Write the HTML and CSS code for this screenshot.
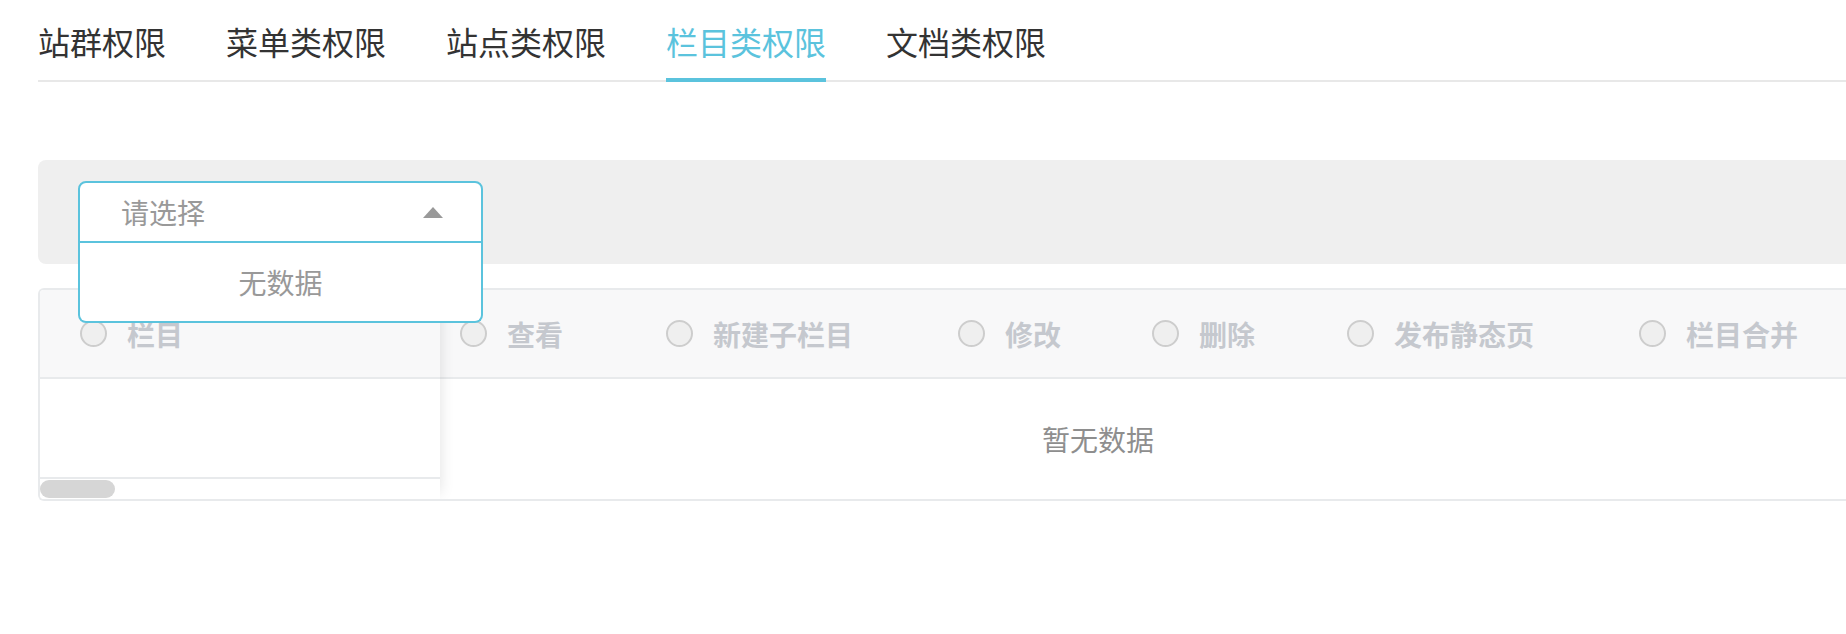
FILE: index.html
```html
<!DOCTYPE html>
<html lang="zh-CN">
<head>
<meta charset="utf-8">
<title>栏目类权限</title>
<link rel="stylesheet" href="styles.css">
</head>
<body>
<div class="page">
  <nav class="tabbar">
    <div class="tab">站群权限</div>
    <div class="tab">菜单类权限</div>
    <div class="tab">站点类权限</div>
    <div class="tab active">栏目类权限</div>
    <div class="tab">文档类权限</div>
  </nav>

  <div class="filter">
    <div class="select">
      <div class="select-input">
        <span class="placeholder">请选择</span>
        <span class="caret"></span>
      </div>
      <div class="select-drop">无数据</div>
    </div>
  </div>

  <div class="table">
    <div class="fixed-col">
      <div class="th fixed-th">
        <span class="radio"></span><span class="th-label">栏目</span>
      </div>
      <div class="fixed-body"></div>
      <div class="fixed-scroll"><span class="thumb"></span></div>
    </div>
    <div class="scroll-part">
      <div class="head-row">
        <div class="th w1"><span class="radio"></span><span class="th-label">查看</span></div>
        <div class="th w2"><span class="radio"></span><span class="th-label">新建子栏目</span></div>
        <div class="th w3"><span class="radio"></span><span class="th-label">修改</span></div>
        <div class="th w4"><span class="radio"></span><span class="th-label">删除</span></div>
        <div class="th w5"><span class="radio"></span><span class="th-label">发布静态页</span></div>
        <div class="th w6"><span class="radio"></span><span class="th-label">栏目合并</span></div>
      </div>
      <div class="empty-row"><span class="empty-text">暂无数据</span></div>
    </div>
  </div>
</div>
</body>
</html>
```

FILE: styles.css
```css
html, body {
  margin: 0;
  padding: 0;
  overflow: hidden;
  background: #fff;
}

body {
  font-family: "Noto Sans CJK SC", "Noto Sans", sans-serif;
  color: #333;
}

.page {
  padding-left: 38px;
  margin-right: -30px;
}

/* Tabs */
.tabbar {
  display: flex;
  gap: 60px;
  box-shadow: inset 0 -2px 0 #e8e8e8;
}

.tab {
  height: 82px;
  box-sizing: border-box;
  padding-top: 25px;
  font-size: 32px;
  line-height: 32px;
  color: #333;
  border-bottom: 4px solid transparent;
  white-space: nowrap;
}

.tab.active {
  color: #5bc3dd;
  border-bottom-color: #5bc3dd;
}

/* Filter box */
.filter {
  margin-top: 78px;
  background: #efefef;
  border-radius: 8px 0 0 8px;
  padding: 21px 0 21px 40px;
}

.select {
  position: relative;
  width: 405px;
  z-index: 5;
}

.select-input {
  height: 62px;
  box-sizing: border-box;
  border: 2px solid #5bc3dd;
  border-radius: 8px 8px 0 0;
  background: #fff;
  display: flex;
  align-items: center;
  justify-content: space-between;
  padding: 0 38px 0 41px;
}

.placeholder {
  font-size: 28px;
  color: #999;
}

.caret {
  width: 0;
  height: 0;
  border-left: 10px solid transparent;
  border-right: 10px solid transparent;
  border-bottom: 11px solid #999;
}

.select-drop {
  position: absolute;
  top: 100%;
  left: 0;
  right: 0;
  height: 80px;
  box-sizing: border-box;
  border: 2px solid #5bc3dd;
  border-top: none;
  border-radius: 0 0 8px 8px;
  background: #fff;
  display: flex;
  align-items: center;
  justify-content: center;
  font-size: 28px;
  color: #999;
}

/* Table */
.table {
  margin-top: 24px;
  display: flex;
  border: 2px solid #e8eaec;
  border-right: none;
  border-radius: 6px 0 0 6px;
  height: 213px;
  box-sizing: border-box;
  overflow: hidden;
}

.th {
  display: flex;
  align-items: center;
  height: 89px;
  box-sizing: border-box;
  background: #f8f8f9;
  border-bottom: 2px solid #e8eaec;
}

.radio {
  width: 27px;
  height: 27px;
  box-sizing: border-box;
  border: 2px solid #cdcdcd;
  border-radius: 50%;
  background: #efefef;
  flex: none;
}

.th-label {
  margin-left: 20px;
  font-size: 28px;
  font-weight: 700;
  color: #c5c8ce;
  white-space: nowrap;
}

.fixed-col {
  width: 400px;
  flex: none;
  display: flex;
  flex-direction: column;
  position: relative;
  z-index: 2;
  background: #fff;
  box-shadow: 6px 0 14px -6px rgba(0, 0, 0, 0.12);
}

.fixed-th {
  padding-left: 40px;
}

.fixed-body {
  height: 100px;
  box-sizing: border-box;
  border-bottom: 2px solid #e8eaec;
}

.fixed-scroll {
  flex: 1;
  padding-top: 1px;
}

.thumb {
  display: block;
  width: 75px;
  height: 18px;
  border-radius: 9px;
  background: #d6d6d6;
}

.scroll-part {
  flex: 1;
  display: flex;
  flex-direction: column;
  min-width: 0;
}

.head-row {
  display: flex;
}

.head-row .th {
  padding-left: 20px;
  flex: none;
}

.w1 { width: 206px; }
.w2 { width: 292px; }
.w3 { width: 194px; }
.w4 { width: 195px; }
.w5 { width: 292px; }
.w6 { width: 260px; }

.empty-row {
  flex: 1;
  display: flex;
  align-items: center;
  padding-left: 602px;
}

.empty-text {
  font-size: 28px;
  color: #8e8e8e;
}
```
